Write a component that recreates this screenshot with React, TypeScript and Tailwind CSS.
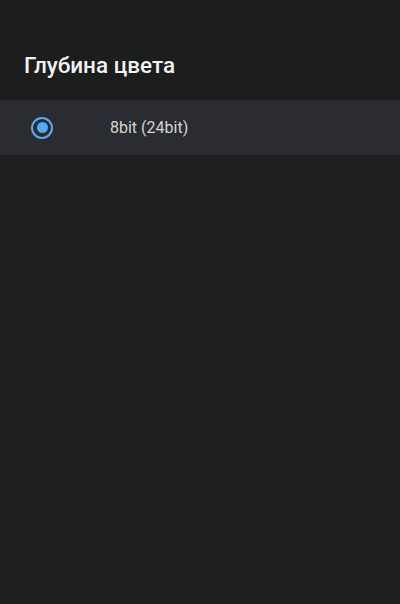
import React from 'react';

export default function App() {
  return (
    <div className="w-[400px] h-[604px] bg-[#202020] flex flex-col" style={{ fontFamily: 'Roboto, "Noto Sans", sans-serif' }}>
      {/* Header */}
      <div className="h-[100px] bg-[#1c1d1d] px-6 pt-[50px]">
        <h1 className="text-[22.5px] leading-[30px] font-medium text-[#f2f2f2]">Глубина цвета</h1>
      </div>

      {/* Option */}
      <div className="h-[55px] bg-[#2a2c31] flex items-center">
        <div className="w-[110px] pl-[31px] flex items-center">
          <div className="w-[22px] h-[22px] rounded-full border-2 border-[#5fa8ef] flex items-center justify-center">
            <div className="w-[11px] h-[11px] rounded-full bg-[#55aaf5]" />
          </div>
        </div>
        <span className="text-[16px] text-[#d6d6d6]">8bit (24bit)</span>
      </div>
    </div>
  );
}
